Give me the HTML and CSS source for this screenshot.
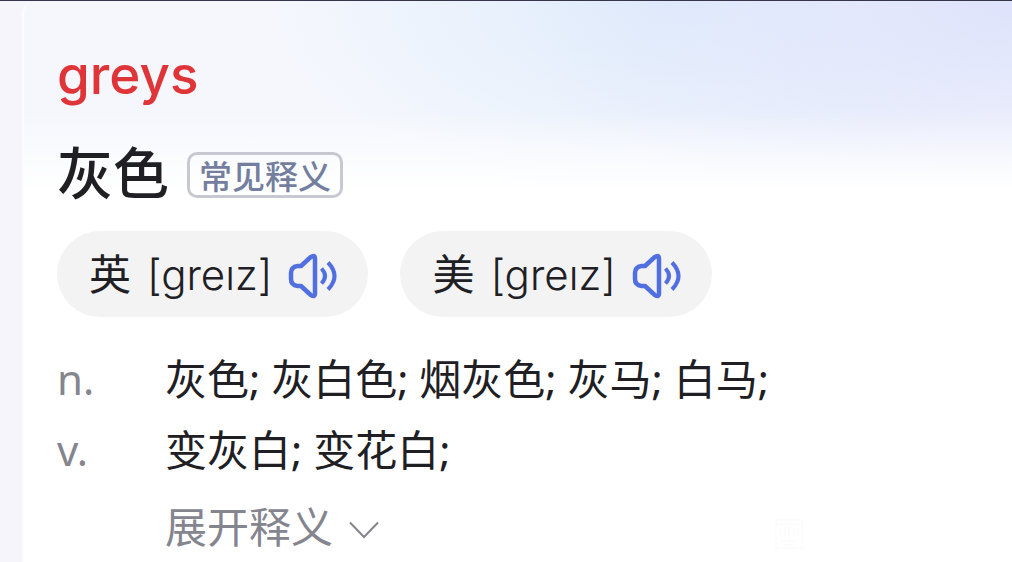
FILE: index.html
```
<!DOCTYPE html>
<html lang="zh-CN">
<head>
<meta charset="utf-8">
<meta name="viewport" content="width=device-width, initial-scale=1">
<title>greys</title>
<link rel="stylesheet" href="styles.css">
</head>
<body>
<main class="card">
  <h1 class="word" lang="en">greys</h1>
  <div class="summary">
    <h2 class="meaning">灰色</h2>
    <span class="badge">常见释义</span>
  </div>
  <div class="sounds">
    <button class="sound" type="button">
      <span class="region">英</span>
      <span class="phonetic">[greız]</span>
      <svg class="speaker" viewBox="0 0 50 46" aria-hidden="true">
        <path d="M13 13 L22.800 4 Q27 1 27 6 V40 Q27 45 22.800 42 L13 33 H9.500 Q3 32 3 26 V20 Q3 14 9.500 13 Z"/>
        <path class="wave" d="M33.500 15.500 Q40.500 23 33.500 30.500 M40 9.500 Q53 23 40 36.500"/>
      </svg>
    </button>
    <button class="sound" type="button">
      <span class="region">美</span>
      <span class="phonetic">[greız]</span>
      <svg class="speaker" viewBox="0 0 50 46" aria-hidden="true">
        <path d="M13 13 L22.800 4 Q27 1 27 6 V40 Q27 45 22.800 42 L13 33 H9.500 Q3 32 3 26 V20 Q3 14 9.500 13 Z"/>
        <path class="wave" d="M33.500 15.500 Q40.500 23 33.500 30.500 M40 9.500 Q53 23 40 36.500"/>
      </svg>
    </button>
  </div>
  <dl class="senses">
    <dt>n.</dt>
    <dd>灰色; 灰白色; 烟灰色; 灰马; 白马;</dd>
    <dt>v.</dt>
    <dd>变灰白; 变花白;</dd>
  </dl>
  <div class="footer">
    <button class="expand" type="button">
      <span>展开释义</span>
      <svg class="chevron" viewBox="0 0 30 18" aria-hidden="true"><path d="M1 1.500 L15 16 L29 1.500"/></svg>
    </button>
    <svg class="mark" viewBox="0 0 28 30" aria-hidden="true"><path d="M1 1 H27 V29 H1 Z M3 5 H25 M5 9 V17 M10 8 V18 M14 8 V19 M19 8 V18 M23 9 V17 M6 22 H22 M9 26 H19"/></svg>
  </div>
</main>
</body>
</html>
```
FILE: styles.css
```
* {
  box-sizing: border-box;
}

body {
  margin: 0;
  min-height: 100vh;
  display: flex;
  padding-left: 22px;
  border-top: 1px solid #37354a;
  background: #f5f5fb;
  color: #202024;
  font-family: "Noto Sans", "Noto Sans CJK SC", sans-serif;
  font-size: 42px;
  font-weight: 400;
}

.card {
  flex: 1;
  padding: 38px 33px 0;
  border-left: 2px solid #fcfcff;
  border-top-left-radius: 12px;
  background:
    linear-gradient(to bottom, transparent 110px, #ffffff 190px),
    radial-gradient(ellipse 500px 260px at 100% 0, #dfe3fb, transparent),
    radial-gradient(ellipse 400px 200px at 65% 0, #dfecfb, transparent),
    #f5f7fd;
}

h1,
h2,
dl,
dd {
  margin: 0;
}

.word {
  color: #e03538;
  font-family: Inter, sans-serif;
  font-size: 53px;
  font-weight: 500;
  line-height: 72px;
}

.summary {
  display: flex;
  align-items: center;
  gap: 18px;
  height: 80px;
  margin-top: 24px;
}

.meaning {
  padding-bottom: 10px;
  font-family: "Noto Sans CJK SC", sans-serif;
  font-size: 56px;
  font-weight: 500;
  line-height: 80px;
}

.badge {
  padding: 0 9px;
  border: 3px solid #c8c8d2;
  border-radius: 10px;
  color: #747e9f;
  font-family: "Noto Sans CJK SC", sans-serif;
  font-size: 33px;
  font-weight: 500;
  line-height: 40px;
}

.sounds {
  display: flex;
  flex-wrap: wrap;
  gap: 32px;
  margin-top: 16px;
}

.sound {
  display: flex;
  align-items: center;
  height: 86px;
  padding: 0 30px 0 32px;
  border: 0;
  border-radius: 43px;
  background: #f3f3f3;
  color: inherit;
  font: inherit;
}

.region {
  padding-bottom: 6px;
}

.phonetic {
  margin: 0 16px;
  font-family: Inter, sans-serif;
  font-size: 42px;
  font-weight: 300;
}

.speaker {
  width: 50px;
  height: 46px;
  margin-top: 4px;
  fill: none;
  stroke: #526fe2;
  stroke-width: 4.5;
  stroke-linejoin: round;
}

.wave {
  stroke-width: 4;
}

.senses {
  display: grid;
  grid-template-columns: 108px 1fr;
  margin-top: 26px;
  line-height: 71px;
}

.senses dt {
  color: #85858f;
}

.footer {
  display: flex;
  align-items: center;
  margin-top: 6px;
  padding-left: 108px;
}

.expand {
  display: flex;
  align-items: center;
  gap: 16px;
  padding: 0;
  border: 0;
  background: none;
  color: #85858f;
  font: inherit;
  line-height: 71px;
}

.chevron {
  width: 30px;
  height: 18px;
  margin-top: 6px;
  fill: none;
  stroke: #85858f;
  stroke-width: 2;
}

.mark {
  width: 28px;
  height: 30px;
  margin-top: 14px;
  margin-left: auto;
  margin-right: 176px;
  fill: none;
  stroke: #fcfcfc;
  stroke-width: 2;
}
```
